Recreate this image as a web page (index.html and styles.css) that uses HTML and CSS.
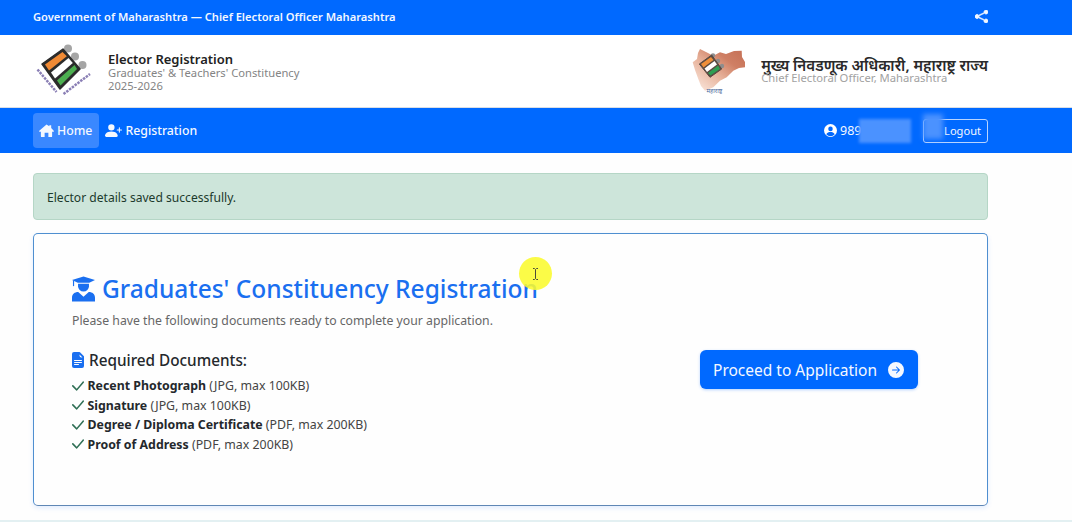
FILE: index.html
```html
<!DOCTYPE html>
<html lang="en">
<head>
<meta charset="utf-8">
<title>Elector Registration</title>
<link rel="stylesheet" href="styles.css">
</head>
<body>
<div class="topbar">
  <span class="topbar-text">Government of Maharashtra — Chief Electoral Officer Maharashtra</span>
  <svg class="share" viewBox="0 0 16 16" fill="currentColor" stroke="currentColor" stroke-width=".8"><path d="M11 2.500a2.500 2.500 0 1 1 .603 1.628l-6.718 3.120a2.500 2.500 0 0 1 0 1.504l6.718 3.120a2.500 2.500 0 1 1-.488.876l-6.718-3.120a2.500 2.500 0 1 1 0-3.256l6.718-3.120A2.500 2.500 0 0 1 11 2.500"/></svg>
</div>
<header class="brand">
  <div class="brand-left">
    <svg class="logo" viewBox="0 0 56 54">
      <circle cx="32" cy="4.500" r="4" fill="#a5a5a5"/><circle cx="39" cy="12.500" r="4" fill="#a5a5a5"/><circle cx="46.500" cy="21" r="4" fill="#a5a5a5"/>
      <path d="M6 20 27 5 44 25 24 45Z" fill="#2b2b2b" stroke="#2b2b2b" stroke-width="1.500" stroke-linejoin="round"/>
      <path d="M9 20.500 26.500 8 30.800 12.300 13 26.500Z" fill="#f08a35"/>
      <path d="M15 28.500 32.500 14 36.800 19 19 34.500Z" fill="#fff"/>
      <path d="M21 36.500 38.500 21 41 25 24.500 41.500Z" fill="#4caf50"/>
      <path d="M1.500 25.500 20.500 48" stroke="#8a7fb5" stroke-width="2.500" stroke-dasharray="2.500 1" fill="none"/>
      <path d="M27.500 50 54 30" stroke="#8a7fb5" stroke-width="2.500" stroke-dasharray="2.500 1" fill="none"/>
    </svg>
    <div class="brand-copy">
      <div class="brand-title">Elector Registration</div>
      <div class="brand-sub">Graduates' &amp; Teachers' Constituency</div>
      <div class="brand-sub">2025-2026</div>
    </div>
  </div>
  <div class="brand-right">
    <svg class="map" viewBox="0 0 54 46">
      <defs><linearGradient id="mapfill" x1="0" y1="1" x2="1" y2="0"><stop offset="0" stop-color="#fdeee6"/><stop offset=".42" stop-color="#e8b49d"/><stop offset=".7" stop-color="#cf7f64"/><stop offset="1" stop-color="#c46f55"/></linearGradient></defs>
      <path d="M8 1 14 4 21.300 7.700 28 4.300 34 6 42 3 49.700 2.700 50 9 53 14 53 19.300 47 20 41.300 22.700 34.700 29.300 28 32.700 21.300 39.300 13 42.700 9 38 6.300 31 3 22 .7 14.300 5 11 6 5Z" fill="url(#mapfill)"/>
      <circle cx="21" cy="7.500" r="2.200" fill="#8d8d8d"/><circle cx="26" cy="13" r="2.200" fill="#8d8d8d"/><circle cx="30" cy="18" r="2.200" fill="#8d8d8d"/>
      <path d="M7.300 16 19.700 7 29.700 21 18 29.300Z" fill="#5a4a42" stroke="#5a4a42" stroke-width="1" stroke-linejoin="round"/>
      <path d="M9 16 19 9 21.500 12 11.500 19.500Z" fill="#ef8f3a"/>
      <path d="M12.500 20.500 22.500 13 25 16.500 15 24Z" fill="#fff"/>
      <path d="M16 25 26 17.500 28 21 18.500 27.500Z" fill="#2f9e53"/>
      <text class="map-label" x="14.500" y="45">महाराष्ट्र</text>
    </svg>
    <div class="ceo-copy">
      <div class="ceo-title">मुख्य निवडणूक अधिकारी, महाराष्ट्र राज्य</div>
      <div class="ceo-sub">Chief Electoral Officer, Maharashtra</div>
    </div>
  </div>
</header>
<nav class="navbar">
  <div class="nav-links">
    <a class="nav-link active">
      <svg class="nav-icon" viewBox="0 0 16 16" fill="currentColor"><path d="M8 1.500.3 8.300c-.4.4-.1 1 .4 1H2V14a1 1 0 0 0 1 1h3v-4.500h4V15h3a1 1 0 0 0 1-1V9.300h1.300c.5 0 .8-.6.4-1L13 5.300V2.500h-2v1Z"/></svg>
      Home
    </a>
    <a class="nav-link">
      <svg class="nav-icon nav-icon-wide" viewBox="0 0 16 16" fill="currentColor"><path d="M1 14s-1 0-1-1 1-4 6-4 6 3 6 4-1 1-1 1zm5-6a3 3 0 1 0 0-6 3 3 0 0 0 0 6"/><path fill-rule="evenodd" d="M13.500 5a.5.5 0 0 1 .5.5V7h1.500a.5.5 0 0 1 0 1H14v1.500a.5.5 0 0 1-1 0V8h-1.500a.5.5 0 0 1 0-1H13V5.500a.5.5 0 0 1 .5-.5"/></svg>
      Registration
    </a>
  </div>
  <div class="nav-user">
    <svg class="user-icon" viewBox="0 0 16 16"><circle cx="8" cy="8" r="8" fill="#fff"/><circle cx="8" cy="6" r="2.800" fill="#0069ff"/><path d="M2.800 12.500C3.800 10.500 5.800 9.800 8 9.800s4.200.7 5.200 2.700A7 7 0 0 1 8 15a7 7 0 0 1-5.200-2.500" fill="#0069ff"/></svg>
    <span class="phone">989</span>
    <span class="logout">Logout</span>
    <span class="redact redact-a"></span>
    <span class="redact redact-b"></span>
  </div>
</nav>
<main class="content">
  <div class="alert">Elector details saved successfully.</div>
  <section class="card">
    <div class="card-main">
      <h1 class="card-title">
        <svg class="grad-icon" viewBox="0 0 24 26" fill="currentColor"><path d="M12 0 24 3.500 18 6.500H6L0 3.500Z"/><path d="M1 4h1.200v6H1Z"/><path d="M6.300 7.500h11.400v2.500a5.700 5.700 0 0 1-11.400 0Z"/><path d="M0 26v-4c0-3.500 2.800-5.800 6.500-5.800L12 21l5.500-4.800c3.700 0 6.500 2.300 6.500 5.800v4Z"/></svg>
        Graduates' Constituency Registration
      </h1>
      <p class="card-lead">Please have the following documents ready to complete your application.</p>
      <h2 class="docs-title">
        <svg class="doc-icon" viewBox="2 0 12 16" fill="currentColor"><path d="M9.293 0H4a2 2 0 0 0-2 2v12a2 2 0 0 0 2 2h8a2 2 0 0 0 2-2V4.707A1 1 0 0 0 13.707 4L10 .293A1 1 0 0 0 9.293 0M9.500 3.500v-1l3 3h-1a2 2 0 0 1-2-2M4.500 9a.5.5 0 0 1 0-1h7a.5.5 0 0 1 0 1zM4 10.500a.5.5 0 0 1 .5-.5h7a.5.5 0 0 1 0 1h-7a.5.5 0 0 1-.5-.5m.5 2.500a.5.5 0 0 1 0-1h4a.5.5 0 0 1 0 1z"/></svg>
        Required Documents:
      </h2>
      <ul class="docs">
        <li><svg class="check" viewBox="3 3.500 11 9" fill="currentColor"><path d="M12.736 3.970a.733.733 0 0 1 1.047 0c.286.289.29.756.01 1.050L7.880 12.010a.733.733 0 0 1-1.065.02L3.217 8.384a.757.757 0 0 1 0-1.060.733.733 0 0 1 1.047 0l3.052 3.093 5.400-6.425z"/></svg><b>Recent Photograph</b> (JPG, max 100KB)</li>
        <li><svg class="check" viewBox="3 3.500 11 9" fill="currentColor"><path d="M12.736 3.970a.733.733 0 0 1 1.047 0c.286.289.29.756.01 1.050L7.880 12.010a.733.733 0 0 1-1.065.02L3.217 8.384a.757.757 0 0 1 0-1.060.733.733 0 0 1 1.047 0l3.052 3.093 5.400-6.425z"/></svg><b>Signature</b> (JPG, max 100KB)</li>
        <li><svg class="check" viewBox="3 3.500 11 9" fill="currentColor"><path d="M12.736 3.970a.733.733 0 0 1 1.047 0c.286.289.29.756.01 1.050L7.880 12.010a.733.733 0 0 1-1.065.02L3.217 8.384a.757.757 0 0 1 0-1.060.733.733 0 0 1 1.047 0l3.052 3.093 5.400-6.425z"/></svg><b>Degree / Diploma Certificate</b> (PDF, max 200KB)</li>
        <li><svg class="check" viewBox="3 3.500 11 9" fill="currentColor"><path d="M12.736 3.970a.733.733 0 0 1 1.047 0c.286.289.29.756.01 1.050L7.880 12.010a.733.733 0 0 1-1.065.02L3.217 8.384a.757.757 0 0 1 0-1.060.733.733 0 0 1 1.047 0l3.052 3.093 5.400-6.425z"/></svg><b>Proof of Address</b> (PDF, max 200KB)</li>
      </ul>
    </div>
    <a class="proceed">
      Proceed to Application
      <svg class="proceed-icon" viewBox="0 0 16 16" fill="currentColor"><path d="M8 0a8 8 0 1 1 0 16A8 8 0 0 1 8 0M4.500 7.500a.5.5 0 0 0 0 1h5.793l-2.147 2.146a.5.5 0 0 0 .708.708l3-3a.5.5 0 0 0 0-.708l-3-3a.5.5 0 1 0-.708.708L10.293 7.500z"/></svg>
    </a>
  </section>
</main>
<div class="cursor-spot">
  <svg class="ibeam" viewBox="0 0 7 12" fill="none" stroke="#4a4a3a" stroke-width="1"><path d="M1 .5h1.500L3.500 1.500 4.500.5H6M3.500 1.500v9M1 11.500h1.500l1-1 1 1H6"/></svg>
</div>
<footer class="foot"></footer>
</body>
</html>
```
FILE: styles.css
```css
* { box-sizing: border-box; }
html, body { margin: 0; height: 522px; overflow: hidden; }
body {
  position: relative;
  display: flex;
  flex-direction: column;
  background: #fefefe;
  color: #212529;
  font-family: "Noto Sans", "Noto Sans CJK SC", sans-serif;
  font-size: 13px;
}
.topbar {
  height: 35px;
  flex: none;
  display: flex;
  align-items: center;
  justify-content: space-between;
  padding: 0 84px 3px 33px;
  background: #0069ff;
  color: #f2f7ff;
}
.topbar-text { font-size: 11.150px; font-weight: 600; }
.share { width: 13px; height: 13px; }
.brand {
  height: 73px;
  flex: none;
  display: flex;
  align-items: center;
  justify-content: space-between;
  padding: 0 84px 0 36px;
  background: #fff;
  border-bottom: 1px solid #d9dee6;
}
.brand-left, .brand-right { display: flex; align-items: center; }
.logo { width: 56px; height: 54px; margin-right: 16px; }
.brand-copy { padding-top: 2px; line-height: 13px; }
.brand-title { font-size: 13px; font-weight: 600; line-height: 13px; color: #222; }
.brand-sub { font-size: 11.200px; line-height: 13px; color: #848484; }
.map { width: 54px; height: 46px; margin-right: 15px; }
.map-label { font-size: 6px; fill: #4d6a9b; }
.ceo-copy { padding-bottom: 1px; }
.ceo-title { font-size: 15.150px; font-weight: 600; line-height: 14px; color: #2a2a2a; }
.ceo-sub { font-size: 11.250px; line-height: 12px; color: #a2a2a2; }
.navbar {
  height: 45px;
  flex: none;
  display: flex;
  align-items: center;
  justify-content: space-between;
  padding: 0 84px 0 33px;
  background: #0069ff;
  color: #f4f8ff;
}
.nav-links { display: flex; align-items: center; gap: 6px; }
.nav-link {
  display: flex;
  align-items: center;
  gap: 3px;
  height: 35px;
  font-size: 12.300px;
  font-weight: 500;
}
.nav-link.active {
  padding: 0 7px 0 6px;
  background: #3a88ff;
  border-radius: 4px;
}
.nav-icon { width: 15px; height: 15px; }
.nav-icon-wide { width: 17px; height: 17px; }
.nav-user { position: relative; display: flex; align-items: center; }
.user-icon { width: 13px; height: 13px; margin-right: 3px; }
.phone { width: 83px; font-size: 12.500px; }
.logout {
  width: 65px;
  height: 24px;
  border: 1px solid #b9d4ff;
  border-radius: 3px;
  padding-right: 6px;
  text-align: right;
  font-size: 11.100px;
  line-height: 22px;
}
.redact { position: absolute; background: #4b92ff; }
.redact-a { left: 35px; top: 0; width: 52px; height: 24px; filter: blur(1.500px); }
.redact-b { left: 99px; top: -5px; width: 20px; height: 25px; filter: blur(2.500px); }
.content {
  flex: 1;
  display: flex;
  flex-direction: column;
  gap: 13px;
  padding: 20px 84px 0 33px;
}
.alert {
  height: 47px;
  display: flex;
  align-items: center;
  padding: 1px 13px 0;
  background: #cde5da;
  border: 1px solid #b5d6c6;
  border-radius: 4px;
  font-size: 12.100px;
  color: #1c3a2c;
}
.card {
  height: 273px;
  display: flex;
  align-items: center;
  justify-content: space-between;
  padding: 0 69px 0 38px;
  background: #fefefe;
  border: 1px solid #4f8fd0;
  border-bottom-color: #5f87b5;
  border-radius: 5px;
  box-shadow: 0 2px 5px rgba(13, 110, 253, .12);
}
.card-main { display: flex; flex-direction: column; padding-bottom: 12px; }
.card-title {
  display: flex;
  align-items: center;
  gap: 7px;
  margin: 0 0 8px;
  font-size: 24.500px;
  font-weight: 500;
  line-height: 32px;
  color: #1a6ff0;
}
.grad-icon { width: 23px; height: 26px; }
.card-lead { margin: 0 0 20px; font-size: 12.250px; line-height: 16px; color: #666; }
.docs-title {
  display: flex;
  align-items: center;
  gap: 5px;
  margin: 0 0 5px;
  font-size: 15.300px;
  font-weight: 500;
  line-height: 22px;
  color: #24282c;
}
.doc-icon { width: 12px; height: 16px; color: #1a6ff0; }
.docs { margin: 0; padding: 0; list-style: none; font-size: 12.350px; line-height: 19.500px; color: #444; }
.docs li { display: flex; align-items: center; white-space: pre-wrap; }
.docs b { font-weight: 700; color: #24282c; }
.check { width: 12px; height: 10px; margin-right: 3.500px; color: #2f6f55; }
.proceed {
  display: flex;
  align-items: center;
  gap: 11px;
  height: 39px;
  padding: 0 14px 0 13px;
  background: #0069ff;
  border-radius: 6px;
  box-shadow: 0 1px 3px rgba(13, 110, 253, .3);
  color: #f4f8ff;
  font-size: 15.500px;
}
.proceed-icon { width: 16px; height: 16px; }
.cursor-spot {
  position: absolute;
  left: 519px;
  top: 257px;
  width: 33px;
  height: 33px;
  display: flex;
  align-items: center;
  justify-content: center;
  border-radius: 50%;
  background: rgba(250, 250, 45, .88);
}
.ibeam { width: 7px; height: 12px; }
.foot { height: 2px; flex: none; background: #e3f0f2; }
```
